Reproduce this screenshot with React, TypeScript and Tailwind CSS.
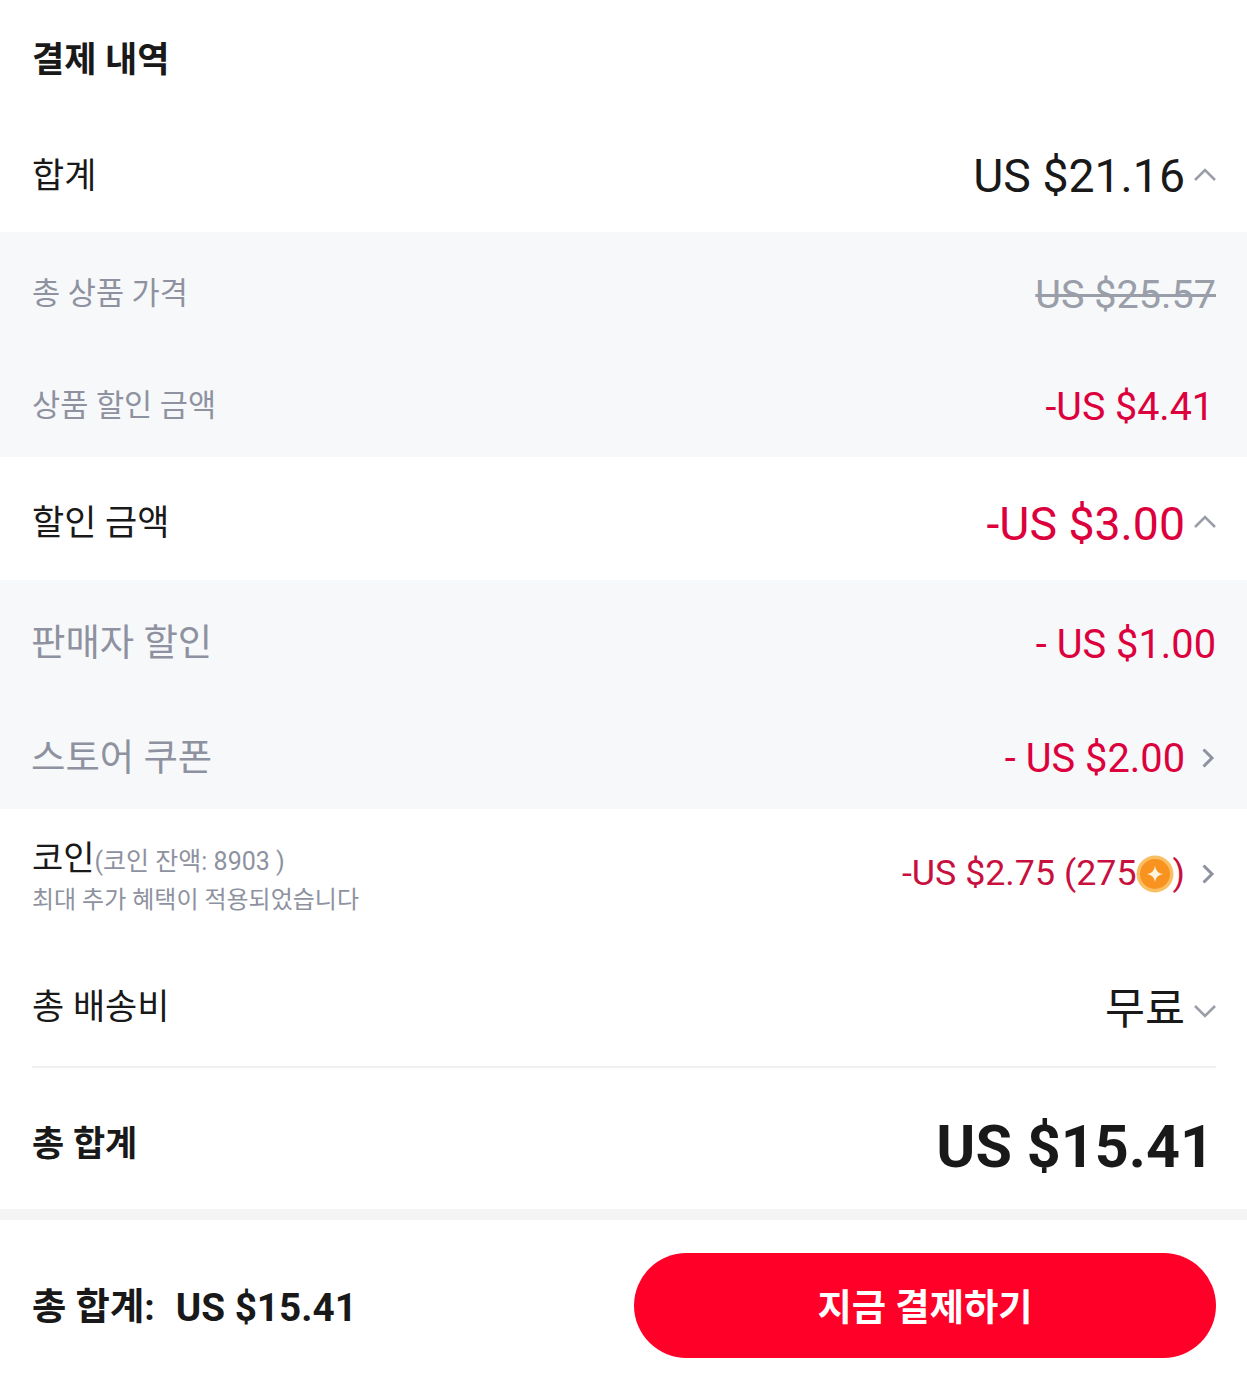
import React from "react";

const Up = ({ cls }: { cls: string }) => (
  <svg width="24" height="24" viewBox="0 0 24 24" fill="none" stroke="#9a9ea9" strokeWidth="2.6" className={cls}>
    <path d="M2 17 L12 7 L22 17" />
  </svg>
);
const Down = () => (
  <svg width="24" height="24" viewBox="0 0 24 24" fill="none" stroke="#9a9ea9" strokeWidth="2.6" className="shrink-0 ml-[8px] mr-[-1px] mt-[4px]">
    <path d="M2 7 L12 17 L22 7" />
  </svg>
);
const Right = () => (
  <svg width="24" height="32" viewBox="0 0 24 32" fill="none" stroke="#8e92a0" strokeWidth="3" className="shrink-0 ml-[8px] mr-[-1px]">
    <path d="M10.5 7.5 L19 16 L10.5 24.5" />
  </svg>
);

const Coin = () => (
  <svg width="38" height="38" viewBox="0 0 38 38" className="inline-block shrink-0 ml-[-1px] mr-[-1px]">
    <circle cx="19" cy="19" r="18.5" fill="#fbbf63" />
    <circle cx="19" cy="19" r="15" fill="#f8931f" />
    <path d="M19 11 Q20 18 27 19 Q20 20 19 27 Q18 20 11 19 Q18 18 19 11 Z" fill="#fff4df" />
  </svg>
);

export default function App() {
  return (
    <div className="w-[1247px] h-[1389px] bg-white flex flex-col overflow-hidden font-['Roboto','Noto_Sans_CJK_KR',sans-serif] text-[#191919]">
      <div className="h-[116px] pl-[32px] pr-[31px] pt-[6px] flex items-center">
        <span className="text-[35px] font-bold">결제 내역</span>
      </div>

      <div className="h-[116px] pl-[32px] pr-[31px] pt-[6px] flex items-center justify-between">
        <span className="text-[35px]">합계</span>
        <div className="flex items-center">
          <span className="text-[46.4px] leading-none mb-[2px]">US $21.16</span>
          <Up cls="shrink-0 ml-[8px] mr-[-1px] mb-[4px]" />
        </div>
      </div>

      <div className="h-[225px] bg-[#f7f8fa] pl-[32px] pr-[31px] flex flex-col">
        <div className="h-[113px] pt-[10px] flex items-center justify-between">
          <span className="text-[30.6px] text-[#8e92a0]">총 상품 가격</span>
          <span className="text-[39.6px] leading-none text-[#9a9ea9] line-through mt-[2px]">US $25.57</span>
        </div>
        <div className="h-[112px] pt-[10px] flex items-center justify-between">
          <span className="text-[30.6px] text-[#8e92a0]">상품 할인 금액</span>
          <span className="text-[39.4px] leading-none text-[#dc003c] pr-[2px] mt-[2px]">-US $4.41</span>
        </div>
      </div>

      <div className="h-[123px] pl-[32px] pr-[31px] pt-[12px] flex items-center justify-between">
        <span className="text-[35px]">할인 금액</span>
        <div className="flex items-center">
          <span className="text-[46.4px] leading-none text-[#dc003c]">-US $3.00</span>
          <Up cls="shrink-0 ml-[8px] mr-[-1px] mb-[6px]" />
        </div>
      </div>

      <div className="h-[229px] bg-[#f7f8fa] pl-[31px] pr-[31px] flex flex-col">
        <div className="h-[115px] pt-[12px] flex items-center justify-between">
          <span className="text-[37.4px] text-[#8e92a0]">판매자 할인</span>
          <span className="text-[39.8px] leading-none text-[#dc003c] mt-[2px]">- US $1.00</span>
        </div>
        <div className="h-[114px] pt-[12px] flex items-center justify-between">
          <span className="text-[37.4px] text-[#8e92a0]">스토어 쿠폰</span>
          <div className="flex items-center">
            <span className="text-[39.8px] leading-none text-[#dc003c] mt-[2px]">- US $2.00</span>
            <Right />
          </div>
        </div>
      </div>

      <div className="h-[136px] pl-[32px] pr-[31px] flex items-start justify-between pt-[26px]">
        <div className="flex flex-col">
          <div className="flex items-baseline h-[46px]">
            <span className="text-[34px] leading-[46px]">코인</span>
            <span className="text-[25px] leading-[46px] text-[#8e92a0]">(코인 잔액: 8903 )</span>
          </div>
          <span className="text-[24px] leading-[32px] text-[#8e92a0] mt-[3px]">최대 추가 혜택이 적용되었습니다</span>
        </div>
        <div className="flex items-center h-[82px] mt-[-2px]">
          <span className="text-[35.8px] leading-none text-[#c8103f] flex items-center">
            -US $2.75 (275
            <Coin />)
          </span>
          <Right />
        </div>
      </div>

      <div className="ml-[32px] mr-[31px] h-[123px] pt-[6px] border-b-2 border-[#f0f0f0] flex items-center justify-between">
        <span className="text-[35px]">총 배송비</span>
        <div className="flex items-center">
          <span className="text-[43.5px] leading-none mt-[2px]">무료</span>
          <Down />
        </div>
      </div>

      <div className="h-[141px] pl-[32px] pr-[31px] pt-[14px] flex items-center justify-between">
        <span className="text-[35px] font-bold">총 합계</span>
        <span className="text-[59.3px] leading-none font-bold pr-[2px] mt-[2px]">US $15.41</span>
      </div>

      <div className="h-[11px] bg-[#f4f4f4]" />

      <div className="flex-1 pl-[32px] pr-[31px] flex items-center justify-between">
        <div className="flex items-center mt-[7px]">
          <span className="text-[37.3px] font-bold">총 합계:</span>
          <span className="text-[38.7px] font-bold ml-[21px]">US $15.41</span>
        </div>
        <button className="w-[582px] h-[105px] mt-[2px] pt-[7px] rounded-full bg-[#ff0029] text-white text-[37.3px] font-bold flex items-center justify-center">
          지금 결제하기
        </button>
      </div>
    </div>
  );
}
